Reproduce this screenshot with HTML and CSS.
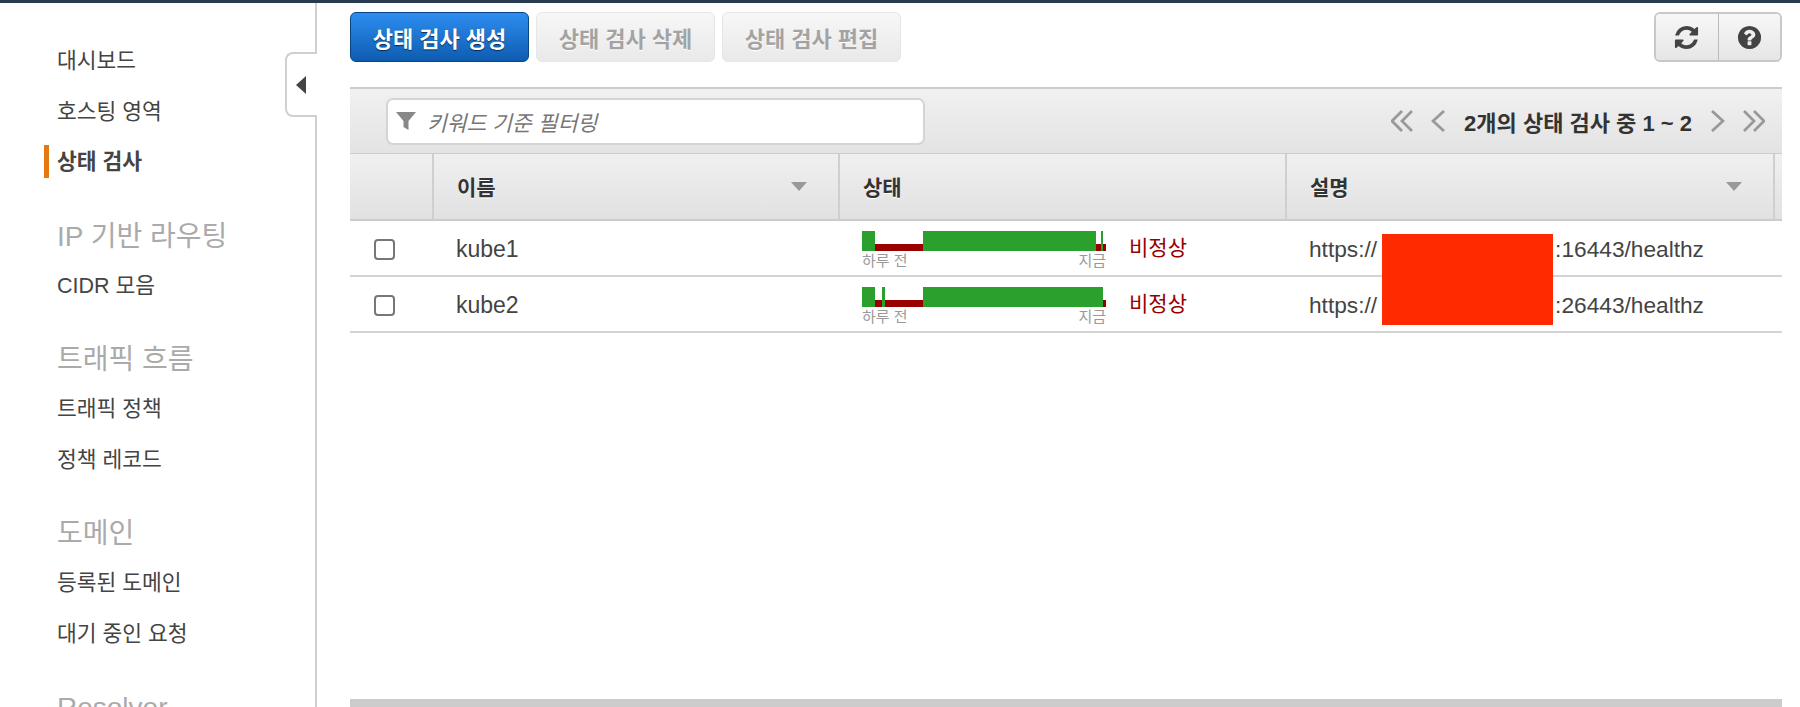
FILE: index.html
```html
<!DOCTYPE html>
<html lang="ko">
<head>
    <meta charset="UTF-8">
    <title>상태 검사</title>
    <link rel="stylesheet" href="styles.css">
</head>
<body>
    <div class="top-bar"></div>
    <div class="page">
        <nav class="sidebar">
            <a class="nav-item">대시보드</a>
            <a class="nav-item">호스팅 영역</a>
            <a class="nav-item active">상태 검사</a>
            <div class="nav-title">IP 기반 라우팅</div>
            <a class="nav-item">CIDR 모음</a>
            <div class="nav-title">트래픽 흐름</div>
            <a class="nav-item">트래픽 정책</a>
            <a class="nav-item">정책 레코드</a>
            <div class="nav-title">도메인</div>
            <a class="nav-item">등록된 도메인</a>
            <a class="nav-item">대기 중인 요청</a>
            <div class="nav-title">Resolver</div>
            <div class="nav-toggle"><span class="nav-toggle-arrow"></span></div>
        </nav>

        <main class="content">
            <div class="toolbar">
                <button class="btn btn-primary">상태 검사 생성</button>
                <button class="btn btn-disabled">상태 검사 삭제</button>
                <button class="btn btn-disabled">상태 검사 편집</button>
                <div class="btn-group">
                    <button class="icon-btn">
                        <svg class="icon" viewBox="0 0 1792 1792"><path d="M1639 1056q0 5-1 7-64 268-268 434.5t-478 166.5q-146 0-282.5-55t-243.5-157l-129 129q-19 19-45 19t-45-19-19-45v-448q0-26 19-45t45-19h448q26 0 45 19t19 45-19 45l-137 137q71 66 161 102t187 36q134 0 250-65t186-179q11-17 53-117 8-23 30-23h192q13 0 22.5 9.5t9.5 22.5zm25-800v448q0 26-19 45t-45 19h-448q-26 0-45-19t-19-45 19-45l138-138q-148-137-349-137-134 0-250 65t-186 179q-11 17-53 117-8 23-30 23h-199q-13 0-22.5-9.5t-9.5-22.5v-7q65-268 270-434.5t480-166.5q146 0 284 55.5t245 156.5l130-129q19-19 45-19t45 19 19 45z"/></svg>
                    </button>
                    <button class="icon-btn">
                        <svg class="icon" viewBox="0 0 1792 1792"><path d="M1024 1376v-192q0-14-9-23t-23-9h-192q-14 0-23 9t-9 23v192q0 14 9 23t23 9h192q14 0 23-9t9-23zm256-672q0-88-55.5-163t-138.5-116-170-41q-243 0-371 213-15 24 8 42l132 100q7 6 19 6 16 0 25-12 53-68 86-92 34-24 86-24 48 0 85.5 26t37.5 59q0 38-20 61t-68 45q-63 28-115.5 86.5t-52.5 125.5v36q0 14 9 23t23 9h192q14 0 23-9t9-23q0-19 21.5-49.5t54.5-49.5q32-18 49-28.5t46-35 44.5-48 28-60.5 12.5-81zm384 192q0 209-103 385.5t-279.5 279.5-385.5 103-385.5-103-279.5-279.5-103-385.5 103-385.5 279.5-279.5 385.5-103 385.5 103 279.5 279.5 103 385.5z"/></svg>
                    </button>
                </div>
            </div>

            <div class="grid-wrap">
                <div class="filter-bar">
                    <div class="filter-input">
                        <svg class="filter-icon" viewBox="0 0 20 20"><path d="M0 1h20l-7.5 9v9l-5-3v-6z"/></svg>
                        <span class="filter-text">키워드 기준 필터링</span>
                    </div>
                    <div class="pager">
                        <svg class="pager-icon wide" viewBox="0 0 22 22"><path d="M11 1 1 11l10 10M21 1 11 11l10 10"/></svg>
                        <svg class="pager-icon" viewBox="0 0 14 22"><path d="M13 1 2 11l11 10"/></svg>
                        <span class="pager-text">2개의 상태 검사 중 1 ~ 2</span>
                        <svg class="pager-icon" viewBox="0 0 14 22"><path d="M1 1l11 10L1 21"/></svg>
                        <svg class="pager-icon wide" viewBox="0 0 22 22"><path d="M1 1l10 10L1 21M11 1l10 10-10 10"/></svg>
                    </div>
                </div>

                <div class="row head">
                    <div class="cell"></div>
                    <div class="cell">이름<span class="sort"></span></div>
                    <div class="cell">상태</div>
                    <div class="cell">설명<span class="sort"></span></div>
                    <div class="cell"></div>
                </div>

                <div class="row">
                    <div class="cell check"><span class="checkbox"></span></div>
                    <div class="cell name">kube1</div>
                    <div class="cell status">
                        <div class="graph">
                            <div class="bar">
                                <span class="seg up" style="width: 13px"></span>
                                <span class="seg down" style="width: 48px"></span>
                                <span class="seg up" style="width: 173px"></span>
                                <span class="seg down" style="width: 5px"></span>
                                <span class="seg up" style="width: 2px"></span>
                                <span class="seg down" style="width: 3px"></span>
                            </div>
                            <div class="graph-labels"><span>하루 전</span><span>지금</span></div>
                        </div>
                        <span class="status-text">비정상</span>
                    </div>
                    <div class="cell url">https://<span class="url-host"></span>:16443/healthz</div>
                    <div class="cell"></div>
                </div>

                <div class="row">
                    <div class="cell check"><span class="checkbox"></span></div>
                    <div class="cell name">kube2</div>
                    <div class="cell status">
                        <div class="graph">
                            <div class="bar">
                                <span class="seg up" style="width: 13px"></span>
                                <span class="seg down" style="width: 7px"></span>
                                <span class="seg up" style="width: 3px"></span>
                                <span class="seg down" style="width: 38px"></span>
                                <span class="seg up" style="width: 180px"></span>
                                <span class="seg down" style="width: 3px"></span>
                            </div>
                            <div class="graph-labels"><span>하루 전</span><span>지금</span></div>
                        </div>
                        <span class="status-text">비정상</span>
                    </div>
                    <div class="cell url">https://<span class="url-host"></span>:26443/healthz</div>
                    <div class="cell"></div>
                </div>

                <div class="redact"></div>
            </div>

            <div class="scroll-bar"></div>
        </main>
    </div>
</body>
</html>
```

FILE: styles.css
```css
* {
    box-sizing: border-box;
}

html, body {
    height: 707px;
    margin: 0;
    overflow: hidden;
}

body {
    font-family: "Liberation Sans", "Noto Sans CJK KR", sans-serif;
    font-size: 21.5px;
    color: #444;
    background-color: #fff;
}

.top-bar {
    height: 3px;
    background-color: #2b3b4f;
}

.page {
    display: flex;
    height: 704px;
}

/* Sidebar */
.sidebar {
    position: relative;
    flex: 0 0 317px;
    padding: 33px 0 0 57px;
    border-right: 2px solid #d0d0d0;
}

.nav-item {
    display: block;
    height: 50.5px;
    line-height: 50.5px;
    color: #444;
}

.nav-item.active {
    position: relative;
    font-weight: bold;
}

.nav-item.active::before {
    content: '';
    position: absolute;
    left: -13px;
    top: 8px;
    width: 5px;
    height: 33px;
    background-color: #e47911;
}

.nav-title {
    height: 49px;
    line-height: 49px;
    margin-top: 24px;
    font-size: 28px;
    color: #aaa;
}

.nav-toggle {
    position: absolute;
    top: 49px;
    right: -2px;
    width: 32px;
    height: 65px;
    display: flex;
    align-items: center;
    padding-left: 9px;
    background-color: #fff;
    border: 2px solid #d0d0d0;
    border-right: none;
    border-radius: 8px 0 0 8px;
}

.nav-toggle-arrow {
    width: 0;
    height: 0;
    border-top: 9px solid transparent;
    border-bottom: 9px solid transparent;
    border-right: 10px solid #444;
}

/* Main area */
.content {
    flex: 1;
    padding: 9px 18px 0 33px;
    display: flex;
    flex-direction: column;
}

.toolbar {
    display: flex;
    gap: 7px;
    height: 50px;
    margin-bottom: 25px;
}

.btn {
    width: 179px;
    height: 50px;
    padding: 0;
    font-family: inherit;
    font-size: 22px;
    font-weight: bold;
    border-radius: 6px;
}

.btn-primary {
    color: #fff;
    background: linear-gradient(#2d8df0, #0e5cb0);
    border: 1px solid #0a4583;
    text-shadow: 0 1px 1px rgba(0, 0, 0, 0.6);
}

.btn-disabled {
    color: #a3a3a3;
    background: linear-gradient(#f7f7f7, #e9e9e9);
    border: 1px solid #e6e6e6;
    text-shadow: 0 1px 0 #fff;
}

.btn-group {
    display: flex;
    margin-left: auto;
    width: 128px;
    height: 50px;
    border: 2px solid #c8c8c8;
    border-radius: 6px;
    overflow: hidden;
}

.icon-btn {
    flex: 1;
    display: flex;
    align-items: center;
    justify-content: center;
    padding: 0;
    border: none;
    background: linear-gradient(#f7f7f7, #e6e6e6);
}

.icon-btn + .icon-btn {
    border-left: 1px solid #bbb;
}

.icon {
    width: 27px;
    height: 27px;
    fill: #444;
}

/* Grid */
.grid-wrap {
    position: relative;
}

.filter-bar {
    display: flex;
    align-items: center;
    justify-content: space-between;
    height: 67px;
    padding: 0 17px 0 36px;
    border-top: 2px solid #ccc;
    border-bottom: 1px solid #ccc;
    background: linear-gradient(#f1f1f1, #e3e3e3);
}

.filter-input {
    display: flex;
    align-items: center;
    width: 539px;
    height: 47px;
    padding-left: 8px;
    background-color: #fff;
    border: 2px solid #d4d4d4;
    border-radius: 7px;
}

.filter-icon {
    width: 20px;
    height: 20px;
    fill: #888;
}

.filter-text {
    margin-left: 11px;
    font-style: italic;
    color: #777;
}

.pager {
    display: flex;
    align-items: center;
    gap: 18px;
}

.pager-icon {
    width: 14px;
    height: 22px;
    fill: none;
    stroke: #999;
    stroke-width: 2.8;
}

.pager-icon.wide {
    width: 22px;
}

.pager-text {
    font-size: 22px;
    font-weight: bold;
    color: #333;
    margin: 0 1px;
}

.row {
    display: grid;
    grid-template-columns: 84px 406px 447px 488px 7px;
    align-items: center;
    height: 56px;
    border-bottom: 2px solid #d4d4d4;
}

.row .cell {
    padding: 2px 0 0 22px;
    white-space: nowrap;
}

.row .cell.check {
    padding-left: 24px;
    display: flex;
}

.row .cell.status {
    padding-top: 5px;
}

.head {
    height: 67px;
    align-items: stretch;
    border-bottom: 2px solid #ccc;
    background: linear-gradient(#f0f0f0, #e1e1e1);
}

.row.head .cell {
    position: relative;
    display: flex;
    align-items: center;
    padding: 0 0 1px 23px;
    font-size: 21px;
    font-weight: bold;
    color: #333;
    text-shadow: 0 1px 0 #fff;
    border-right: 2px solid #cfcfcf;
}

.row.head .cell:last-child {
    border-right: none;
}

.sort {
    margin-left: auto;
    margin-right: 31px;
    width: 0;
    height: 0;
    border-left: 8px solid transparent;
    border-right: 8px solid transparent;
    border-top: 9px solid #999;
}

.checkbox {
    width: 21px;
    height: 21px;
    border: 2px solid #777;
    border-radius: 4px;
    background-color: #fff;
}

.name {
    font-size: 23px;
}

.status {
    display: flex;
    align-items: flex-start;
    gap: 23px;
}

.graph {
    width: 244px;
}

.bar {
    display: flex;
    align-items: flex-end;
    height: 20px;
}

.seg.up {
    height: 20px;
    background-color: #2ca02c;
}

.seg.down {
    height: 7px;
    background-color: #990000;
}

.graph-labels {
    display: flex;
    justify-content: space-between;
    margin-top: 1px;
    font-size: 15px;
    line-height: 18px;
    color: #999;
}

.status-text {
    font-size: 21px;
    line-height: 33px;
    color: #990000;
}

.url {
    font-size: 22.7px;
}

.url-host {
    display: inline-block;
    width: 178px;
}

.redact {
    position: absolute;
    left: 1032px;
    top: 147px;
    width: 171px;
    height: 91px;
    background-color: #ff2a00;
}

.scroll-bar {
    height: 8px;
    margin-top: auto;
    background-color: #ccc;
}
```
